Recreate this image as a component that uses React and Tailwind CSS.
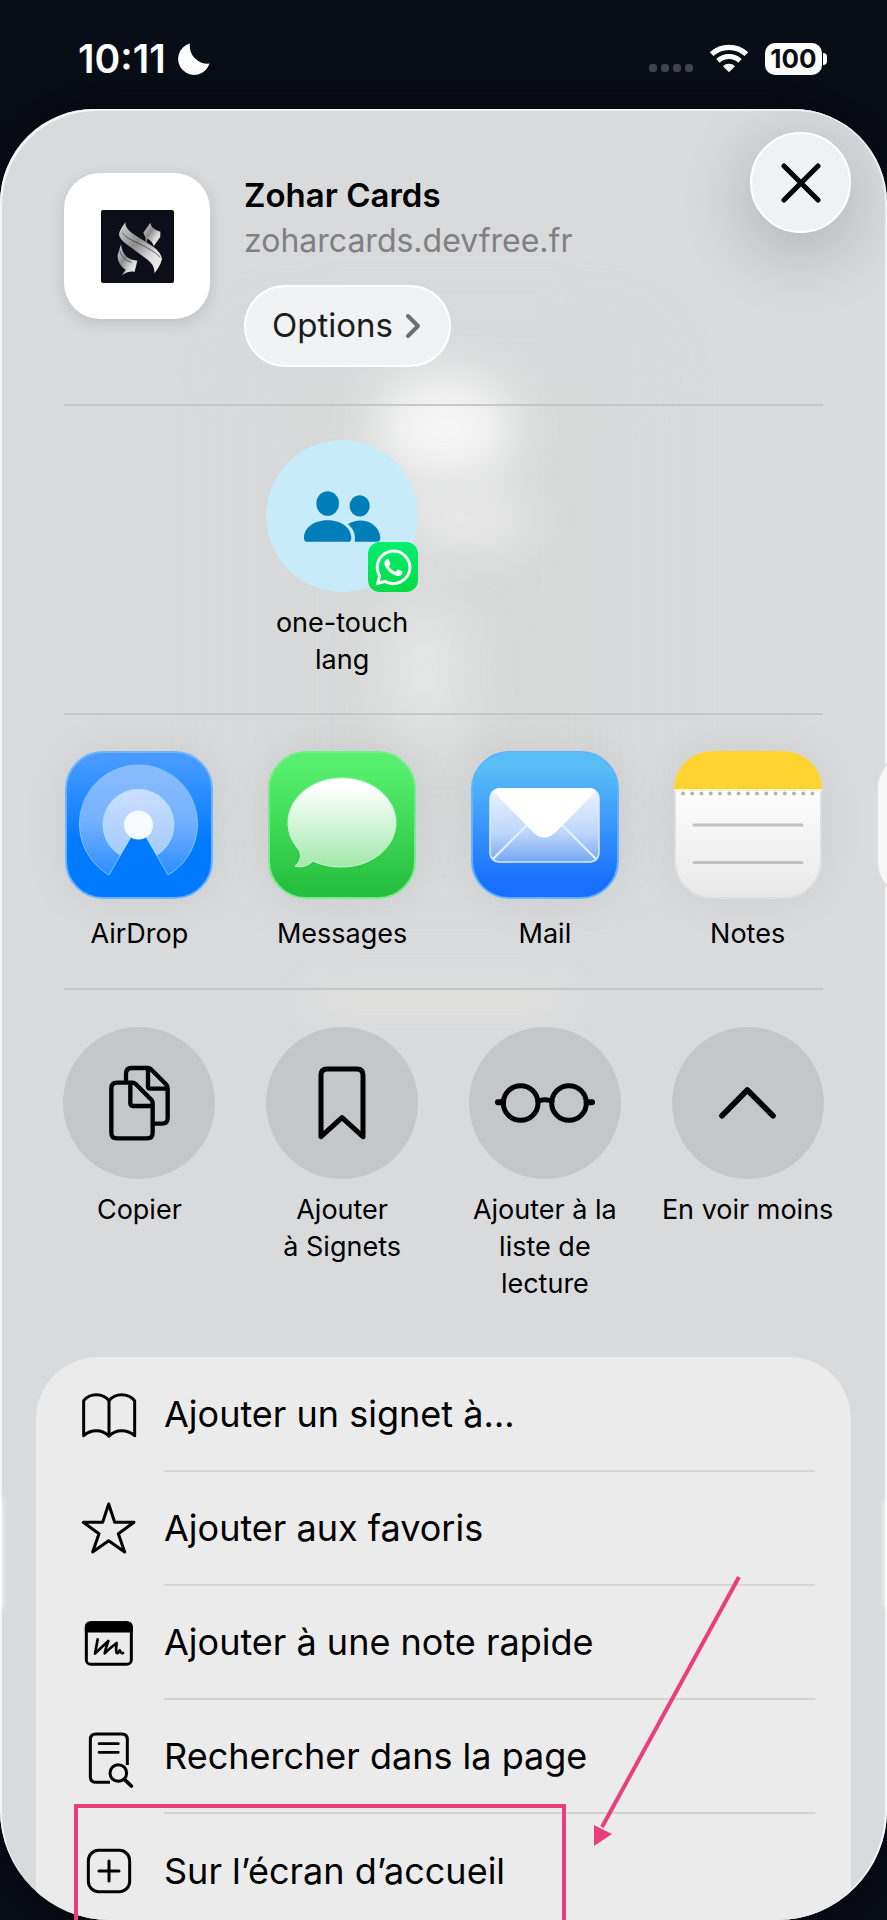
import React from 'react';
import { FaWhatsapp } from 'react-icons/fa';

const iconStroke = {
  fill: 'none',
  stroke: 'currentColor',
  strokeLinecap: 'round',
  strokeLinejoin: 'round'
};

function StatusBar() {
  return (
    <header className="flex h-[109px] shrink-0 items-center justify-between pt-2 pr-[60px] pl-[78px] text-white">
      <div className="flex items-center gap-3">
        <span className="text-[39px] leading-10 font-semibold">10:11</span>
        <svg viewBox="0 0 32 32" className="size-8" fill="currentColor" aria-hidden="true">
          <path d="M12 0.500 A16 16 0 1 0 31.500 20.500 A17.500 17.500 0 0 1 12 0.500Z" />
        </svg>
      </div>
      <div className="flex items-center">
        <div className="mt-[18px] mr-[17px] flex gap-1">
          <span className="size-2 rounded-[3px] bg-[#434449]" />
          <span className="size-2 rounded-[3px] bg-[#434449]" />
          <span className="size-2 rounded-[3px] bg-[#434449]" />
          <span className="size-2 rounded-[3px] bg-[#434449]" />
        </div>
        <svg viewBox="0 0 114 86" className="mr-[17px] h-[29px] w-[38px]" fill="none" stroke="#fff" aria-hidden="true">
          <path d="M5 30 A76 76 0 0 1 109 30" strokeWidth="16" />
          <path d="M24 50 A48 48 0 0 1 90 50" strokeWidth="15" />
          <path d="M57 84 L39 66 A26 26 0 0 1 75 66Z" fill="#fff" stroke="none" />
        </svg>
        <div className="flex items-center gap-px">
          <span className="flex h-8 w-[57px] items-center justify-center rounded-[10px] bg-white text-[26px] font-bold text-[#0a0e16]">
            100
          </span>
          <span className="h-3 w-1 rounded-r-full bg-white" />
        </div>
      </div>
    </header>
  );
}

function SiteLogo() {
  return (
    <svg viewBox="0 0 219 219" className="size-[73px] rounded-xs bg-[#0e0e19]" aria-hidden="true">
      <defs>
        <linearGradient id="brush" x1="0" y1="0" x2="1" y2="1">
          <stop offset="0" stopColor="#d8d8d8" />
          <stop offset="0.4" stopColor="#8b8b8d" />
          <stop offset="0.7" stopColor="#dcdcdc" />
          <stop offset="1" stopColor="#f3f3f3" />
        </linearGradient>
      </defs>
      <path
        d="M73 37 Q72 56 100 74 L150 106 Q180 125 183 147 Q178 168 160 190 Q163 167 138 148 L84 108 Q54 88 54 72 Q56 60 73 37Z"
        fill="url(#brush)"
      />
      <path d="M148 38 Q150 56 178 65 L178 80 L158 109 Q154 92 139 86 L133 108 L134 84 L127 68Z" fill="url(#brush)" />
      <path d="M60 103 Q64 136 88 148 L109 152 L101 185 Q80 182 62 196 L74 180 Q48 160 50 135Z" fill="url(#brush)" />
      <path d="M64 68 Q74 84 112 100 Q160 122 178 142" fill="none" stroke="#2b2b33" strokeWidth="2" />
      <path d="M56 122 Q64 148 92 158" fill="none" stroke="#2b2b33" strokeWidth="2" />
    </svg>
  );
}

function PeopleIcon() {
  return (
    <svg viewBox="0 0 240 164" className="h-[55px] w-20" fill="#007eb9" aria-hidden="true">
      <ellipse cx="77" cy="43" rx="34" ry="37" />
      <ellipse cx="173" cy="50" rx="30" ry="32" />
      <path d="M6 144 C8 112 40 93 77 93 C114 93 146 112 148 144 Q149 158 138 158 H16 Q5 158 6 144Z" />
      <path d="M138 105 C160 90 192 91 212 105 Q234 121 235 146 Q235 158 224 158 H158 C162 136 154 118 138 105Z" />
    </svg>
  );
}

function AirDropIcon() {
  return (
    <svg viewBox="0 0 148 148" className="size-full" aria-hidden="true">
      <defs>
        <linearGradient id="airBg" x1="0" y1="0" x2="0" y2="1">
          <stop offset="0.05" stopColor="#489bff" />
          <stop offset="0.62" stopColor="#007aff" />
        </linearGradient>
        <linearGradient id="airOuter" x1="0" y1="0" x2="0" y2="1">
          <stop offset="0" stopColor="#8abdff" />
          <stop offset="0.5" stopColor="#75b1ff" />
          <stop offset="1" stopColor="#2b8dff" />
        </linearGradient>
        <linearGradient id="airInner" x1="0" y1="0" x2="0" y2="1">
          <stop offset="0" stopColor="#cde0fd" />
          <stop offset="1" stopColor="#a3caff" />
        </linearGradient>
      </defs>
      <rect x="1" y="1" width="146" height="146" rx="37" fill="url(#airBg)" stroke="#6fb4fb" strokeWidth="2" />
      <path d="M44 124 A59 59 0 1 1 103 124 L80 84 H67Z" fill="url(#airOuter)" stroke="#7fc4fd" strokeLinejoin="round" />
      <path d="M55 104 A35.500 35.500 0 1 1 92 104 L80 84 H67Z" fill="url(#airInner)" stroke="#a9e0ff" strokeLinejoin="round" />
      <circle cx="73.500" cy="74" r="14.500" fill="#f7faff" />
    </svg>
  );
}

function MessagesIcon() {
  return (
    <svg viewBox="0 0 148 148" className="size-full" aria-hidden="true">
      <defs>
        <linearGradient id="msgBg" x1="0" y1="0" x2="0" y2="1">
          <stop offset="0.1" stopColor="#56f06e" />
          <stop offset="0.95" stopColor="#26be3e" />
        </linearGradient>
        <linearGradient id="msgBubble" x1="0" y1="0" x2="0" y2="1">
          <stop offset="0.1" stopColor="#ffffff" />
          <stop offset="1" stopColor="#a2e8ac" />
        </linearGradient>
      </defs>
      <rect x="1" y="1" width="146" height="146" rx="37" fill="url(#msgBg)" stroke="#75ee88" strokeWidth="2" />
      <path
        d="M74 27 C104 27 128 47 128 71.500 C128 96 104 116 74 116 C63 116 53 114 45 110 C40 115 33 117 27 115 C32 111 34 105 31 99 C24 91 20 82 20 71.500 C20 47 44 27 74 27Z"
        fill="url(#msgBubble)"
        stroke="#c6f7cd"
      />
    </svg>
  );
}

function MailIcon() {
  return (
    <svg viewBox="0 0 148 148" className="size-full" aria-hidden="true">
      <defs>
        <linearGradient id="mailBg" x1="0" y1="0" x2="0" y2="1">
          <stop offset="0.1" stopColor="#59bdf6" />
          <stop offset="0.9" stopColor="#196ffe" />
        </linearGradient>
        <linearGradient id="mailPaper" x1="0" y1="0" x2="0" y2="1">
          <stop offset="0" stopColor="#edf4ff" />
          <stop offset="0.6" stopColor="#bdd6fb" />
          <stop offset="1" stopColor="#77a8f2" />
        </linearGradient>
      </defs>
      <rect x="1" y="1" width="146" height="146" rx="37" fill="url(#mailBg)" stroke="#5fb4fb" strokeWidth="2" />
      <rect x="19" y="38" width="109" height="73" rx="9" fill="url(#mailPaper)" stroke="#dcebff" strokeWidth="1.500" />
      <path d="M22 108 L56 74 M125 108 L91 74" stroke="#e6f0ff" strokeWidth="2" />
      <path d="M22 40 Q25 37 28 37 H119 Q123 37 125 40 L87 79 Q73 94 60 79Z" fill="#ffffff" />
    </svg>
  );
}

const noteDots = Array.from({ length: 15 }, (_, i) => 9 + i * 9.25);

function NotesIcon() {
  return (
    <svg viewBox="0 0 148 148" className="size-full" aria-hidden="true">
      <defs>
        <linearGradient id="notesBg" x1="0" y1="0" x2="0" y2="1">
          <stop offset="0.3" stopColor="#fcfcfc" />
          <stop offset="1" stopColor="#e8e8e8" />
        </linearGradient>
        <clipPath id="notesClip">
          <rect width="148" height="148" rx="38" />
        </clipPath>
      </defs>
      <rect x="1" y="1" width="146" height="146" rx="37" fill="url(#notesBg)" stroke="#dedede" strokeWidth="2" />
      <g clipPath="url(#notesClip)">
        <rect width="148" height="38" fill="#ffd431" />
        <rect y="38" width="148" height="2" fill="#fdf3cb" />
      </g>
      {noteDots.map((x) => (
        <circle key={x} cx={x} cy="42.500" r="1.900" fill="#b5b3ab" />
      ))}
      <path d="M20 74 H128 M20 111.500 H128" stroke="#c0c1c1" strokeWidth="3" strokeLinecap="round" />
    </svg>
  );
}

function BlankAppIcon() {
  return (
    <svg viewBox="0 0 148 148" className="size-full" aria-hidden="true">
      <rect x="1" y="1" width="146" height="146" rx="37" fill="#f6f6f6" stroke="#dedede" strokeWidth="2" />
    </svg>
  );
}

function CopyIcon() {
  return (
    <svg viewBox="0 0 192 240" className="h-20 w-16" strokeWidth="13" {...iconStroke} aria-hidden="true">
      <path d="M30 59 H76 Q82 59 86 63 L133 110 Q137 115 137 121 V209 Q137 226 120 226 H30 Q13 226 13 209 V76 Q13 59 30 59Z" />
      <path d="M70 61 V121 Q70 129 78 129 H135" />
      <path strokeLinecap="butt" d="M57 56 V32 Q57 15 74 15 H122 Q128 15 132 19 L177 64 Q182 69 182 76 V165 Q182 182 165 182 H142" />
      <path d="M123 17 V70 Q123 77 130 77 H180" />
    </svg>
  );
}

function BookmarkIcon() {
  return (
    <svg viewBox="0 0 144 228" className="h-[76px] w-12" strokeWidth="15" {...iconStroke} aria-hidden="true">
      <path d="M9 215 V30 Q9 12 27 12 H117 Q135 12 135 30 V215 L72 158Z" />
    </svg>
  );
}

function GlassesIcon() {
  return (
    <svg viewBox="0 0 300 138" className="h-[46px] w-[100px]" strokeWidth="15" {...iconStroke} aria-hidden="true">
      <circle cx="77" cy="69" r="52" />
      <circle cx="222" cy="69" r="52" />
      <path d="M129 64 Q150 54 171 64" />
      <path d="M9 67 H24 M275 67 H291" strokeWidth="18" />
    </svg>
  );
}

function CollapseIcon() {
  return (
    <svg viewBox="0 0 171 108" className="h-9 w-[57px]" strokeWidth="17" {...iconStroke} aria-hidden="true">
      <path d="M9 92 L85 15 L162 92" />
    </svg>
  );
}

function BookIcon() {
  return (
    <svg viewBox="0 0 180 180" className="size-[60px]" strokeWidth="9" {...iconStroke} aria-hidden="true">
      <path d="M14 152 V47 Q28 29 52 29 Q76 29 90 47 Q104 29 128 29 Q152 29 167 47 V152 Q150 137 128 137 Q106 137 90 153 Q74 137 52 137 Q30 137 14 152Z" />
      <path d="M90 47 V153" />
    </svg>
  );
}

function StarIcon() {
  return (
    <svg viewBox="0 0 180 180" className="size-[60px]" strokeWidth="9" {...iconStroke} aria-hidden="true">
      <path d="M89 15 L107 70 H165 L118 104 L137 159 L89 125 L41 159 L60 104 L13 70 H71Z" />
    </svg>
  );
}

function QuickNoteIcon() {
  return (
    <svg viewBox="0 0 180 180" className="size-[60px]" strokeWidth="9" {...iconStroke} aria-hidden="true">
      <rect x="22" y="29" width="135" height="125" rx="14" />
      <path d="M22 54 V43 Q22 29 36 29 H143 Q157 29 157 43 V54Z" fill="currentColor" />
      <path
        strokeWidth="8"
        d="M56 79 Q52 102 48 122 Q66 104 88 84 Q80 106 77 121 Q94 104 113 90 Q110 106 112 118 Q117 124 122 112 Q126 122 132 120"
      />
    </svg>
  );
}

function FindInPageIcon() {
  return (
    <svg viewBox="0 0 180 180" className="size-[60px] overflow-visible" strokeWidth="9" {...iconStroke} aria-hidden="true">
      <path strokeLinecap="butt" d="M145 114 V38 Q145 21 128 21 H51 Q34 21 34 38 V149 Q34 166 51 166 H93" />
      <path d="M60 50 H118 M60 76 H118" strokeWidth="8" />
      <circle cx="118" cy="138" r="25" />
      <path d="M137 158 L157 177" strokeWidth="11" />
    </svg>
  );
}

function AddSquareIcon() {
  return (
    <svg viewBox="0 0 180 180" className="size-[60px]" strokeWidth="9" {...iconStroke} aria-hidden="true">
      <rect x="28" y="28" width="124" height="124" rx="31" />
      <path d="M60 90 H120 M90 60 V120" />
    </svg>
  );
}

const apps = [
  { name: 'AirDrop', icon: <AirDropIcon /> },
  { name: 'Messages', icon: <MessagesIcon /> },
  { name: 'Mail', icon: <MailIcon /> },
  { name: 'Notes', icon: <NotesIcon /> }
];

const quickActions = [
  { name: 'Copier', icon: <CopyIcon /> },
  { name: 'Ajouter à\u00a0Signets', icon: <BookmarkIcon /> },
  { name: 'Ajouter à la liste de lecture', icon: <GlassesIcon /> },
  { name: 'En voir moins', icon: <CollapseIcon /> }
];

const listActions = [
  { name: 'Ajouter un signet à…', icon: <BookIcon /> },
  { name: 'Ajouter aux favoris', icon: <StarIcon /> },
  { name: 'Ajouter à une note rapide', icon: <QuickNoteIcon /> },
  { name: 'Rechercher dans la page', icon: <FindInPageIcon /> },
  { name: 'Sur l’écran d’accueil', icon: <AddSquareIcon /> }
];

function Divider() {
  return <hr className="mx-16 border-t-2 border-[#c6c7c9]" />;
}

function ShareHeader() {
  return (
    <div className="flex items-start pt-[23px] pr-9 pb-[37px] pl-16">
      <div className="mt-[41px] flex size-[146px] shrink-0 items-center justify-center rounded-[36px] bg-white shadow-[0_4px_16px_rgba(0,0,0,0.12)]">
        <SiteLogo />
      </div>
      <div className="mt-10 ml-[34px] flex-1">
        <h1 className="text-[33px] leading-[46px] font-semibold">Zohar Cards</h1>
        <p className="text-[32px] leading-[46px] text-[#7f8082]">zoharcards.devfree.fr</p>
        <button
          type="button"
          className="mt-[21px] flex h-[82px] items-center gap-3 rounded-full border-2 border-white bg-[#f1f2f3] pr-7 pl-[26px] text-[33px] text-[#1b1b1c]"
        >
          Options
          <svg viewBox="0 0 16 26" className="h-[26px] w-4" strokeWidth="4" {...iconStroke} stroke="#6e6e70" aria-hidden="true">
            <path d="M3 3 L13 13 L3 23" />
          </svg>
        </button>
      </div>
      <button
        type="button"
        aria-label="Fermer"
        className="flex size-[101px] shrink-0 items-center justify-center rounded-full border-2 border-white bg-[#f0f1f3] shadow-[0_16px_70px_rgba(0,0,0,0.22)]"
      >
        <svg viewBox="0 0 40 40" className="size-10" strokeWidth="5" {...iconStroke} aria-hidden="true">
          <path d="M3 3 L37 37 M37 3 L3 37" />
        </svg>
      </button>
    </div>
  );
}

function Contacts() {
  return (
    <div className="mx-[38px] grid grid-cols-4 pt-[34px] pb-[35px]">
      <button type="button" className="col-start-2 flex flex-col items-center gap-3">
        <span className="relative flex size-[152px] items-center justify-center rounded-full bg-[#c8ebfa]">
          <PeopleIcon />
          <span className="absolute right-0 bottom-0 flex size-[50px] items-center justify-center rounded-xl bg-linear-to-b from-[#05ee70] to-[#02dc44] text-white">
            <FaWhatsapp size={41} />
          </span>
        </span>
        <span className="w-[176px] text-[27px] leading-[37px]">one-touch lang</span>
      </button>
    </div>
  );
}

function AppRow() {
  return (
    <div className="mx-[38px] grid auto-cols-[25%] grid-flow-col pt-9 pb-9">
      {apps.map((app) => (
        <button key={app.name} type="button" className="flex flex-col items-center gap-4">
          <span className="size-[148px] rounded-[38px] shadow-[0_0_50px_rgba(0,0,0,0.06)]">{app.icon}</span>
          <span className="text-[27px] leading-[37px]">{app.name}</span>
        </button>
      ))}
      <button type="button" aria-label="Plus d’apps" className="flex flex-col items-center">
        <span className="size-[148px]"><BlankAppIcon /></span>
      </button>
    </div>
  );
}

function QuickActions() {
  return (
    <div className="mx-[38px] grid grid-cols-4 pt-[37px] pb-[55px]">
      {quickActions.map((action) => (
        <button key={action.name} type="button" className="flex flex-col items-center gap-3">
          <span className="flex size-[152px] items-center justify-center rounded-full bg-[#c5c6c8]">{action.icon}</span>
          <span className="w-[176px] text-[27px] leading-[37px]">{action.name}</span>
        </button>
      ))}
    </div>
  );
}

function ActionList() {
  return (
    <ul className="mx-9 rounded-t-[62px] bg-[#ebebeb] pt-px pr-9 pl-[43px]">
      {listActions.map((action, i) => (
        <li key={action.name}>
          <button type="button" className="flex w-full items-center gap-[25px] text-left">
            <span className="shrink-0">{action.icon}</span>
            <span
              className={`flex h-[114px] flex-1 items-center text-[36px] ${
                i < listActions.length - 1 ? 'border-b-2 border-[#d5d5d5]' : ''
              }`}
            >
              {action.name}
            </span>
          </button>
        </li>
      ))}
    </ul>
  );
}

// Marks the entry the visitor has to tap
function Annotation() {
  return (
    <>
      <div className="pointer-events-none absolute -bottom-2 left-[74px] h-[124px] w-[492px] border-4 border-[#e83e7c]" />
      <svg
        viewBox="0 0 150 272"
        className="pointer-events-none absolute bottom-[73px] left-[592px] h-[272px] w-[150px]"
        aria-hidden="true"
      >
        <path d="M147 2 L10 252" stroke="#e83e7c" strokeWidth="4" />
        <path d="M2 250 L20 259 L2 271Z" fill="#e83e7c" />
      </svg>
    </>
  );
}

function App() {
  return (
    <div className="relative flex h-screen flex-col overflow-hidden bg-[#090d16] font-[Inter,sans-serif] text-black">
      <StatusBar />
      <main className="relative flex-1 overflow-hidden rounded-t-[94px] rounded-b-[110px] bg-[#d9dadc] shadow-[0_0_40px_#07090d,inset_2px_2px_0_#f4f5f6,inset_-2px_0_0_#f4f5f6]">
        {/* blurred page behind the sheet */}
        <div className="absolute top-[240px] left-[260px] h-[500px] w-[370px] bg-[#d7d8d8] blur-[40px]" />
        <div className="absolute top-[265px] left-[375px] h-[110px] w-[140px] rounded-full bg-[#f6f6f6] blur-[26px]" />
        <div className="absolute top-[380px] left-[400px] h-[60px] w-[130px] rounded-full bg-[#e9e9e9] blur-[24px]" />
        <div className="absolute top-[490px] left-[385px] h-[140px] w-[80px] rounded-full bg-[#e5e6e6] blur-[28px]" />
        <div className="absolute top-[875px] left-[310px] h-[34px] w-[260px] rounded-full bg-[#e0e0de] blur-[16px]" />
        <div className="absolute top-[1390px] -left-1 h-[110px] w-1.5 rounded-full bg-white blur-[3px]" />
        <div className="absolute top-[1390px] -right-1 h-[110px] w-1.5 rounded-full bg-white blur-[3px]" />
        <div className="relative">
          <ShareHeader />
          <Divider />
          <Contacts />
          <Divider />
          <AppRow />
          <Divider />
          <QuickActions />
          <ActionList />
        </div>
      </main>
      <Annotation />
    </div>
  );
}

export default App;
